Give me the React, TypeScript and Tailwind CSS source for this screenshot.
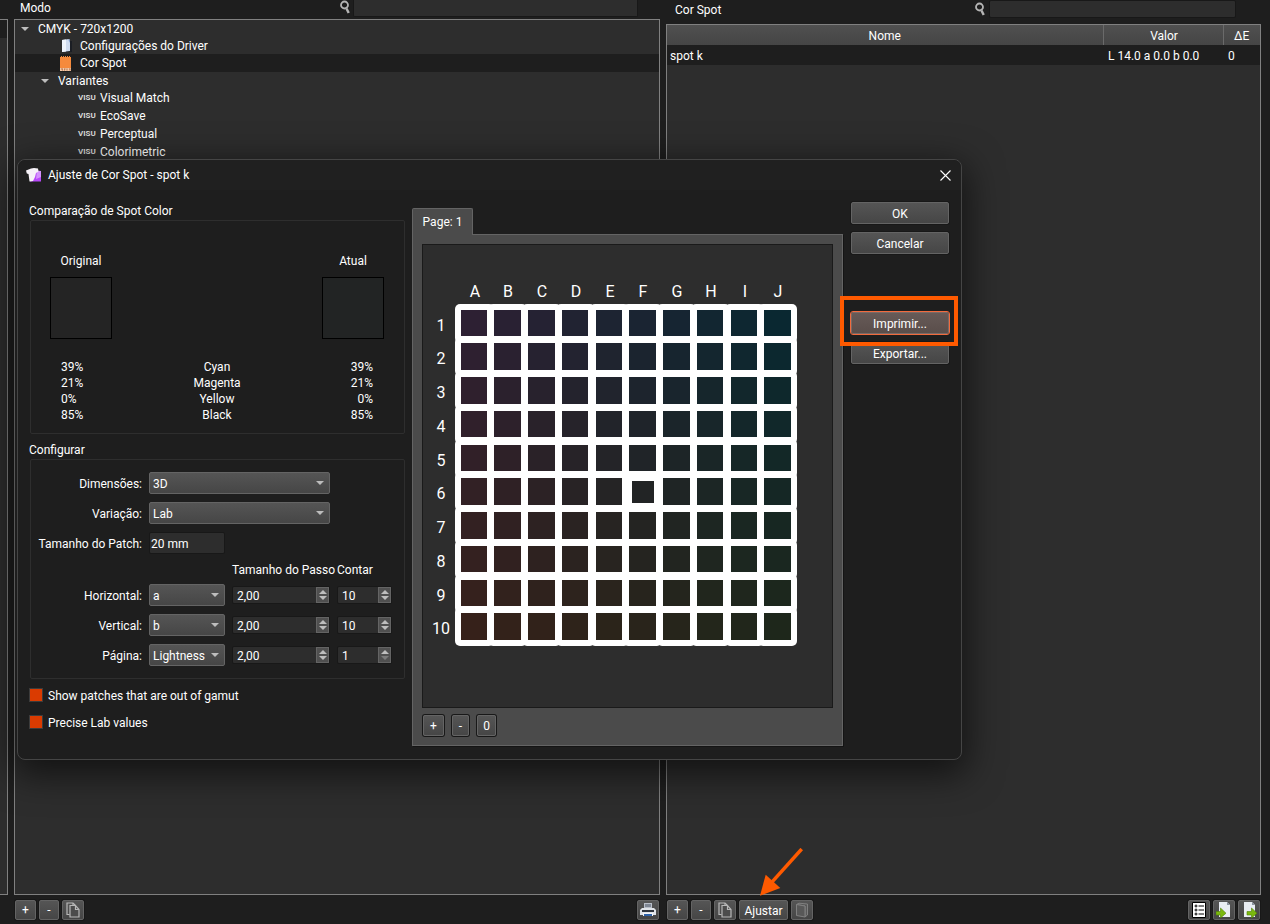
import React, { useState } from "react";

const COLS = ["A", "B", "C", "D", "E", "F", "G", "H", "I", "J"];
const ROWS = [1, 2, 3, 4, 5, 6, 7, 8, 9, 10];
const PITCH = 33.75;

// corner colours of the a/b plane, the rest is interpolated
const TOP_LEFT = [45, 32, 51];
const TOP_RIGHT = [10, 40, 49];
const BOTTOM_LEFT = [54, 33, 26];
const BOTTOM_RIGHT = [30, 39, 27];

const patchColor = (col: number, row: number) => {
  const u = col / 9;
  const v = row / 9;
  const rgb = [0, 1, 2].map((i) => {
    const top = TOP_LEFT[i] * (1 - u) + TOP_RIGHT[i] * u;
    const bottom = BOTTOM_LEFT[i] * (1 - u) + BOTTOM_RIGHT[i] * u;
    return Math.round(top * (1 - v) + bottom * v);
  });
  return `rgb(${rgb.join(",")})`;
};

const inks = [
  { name: "Cyan", original: "39%", current: "39%" },
  { name: "Magenta", original: "21%", current: "21%" },
  { name: "Yellow", original: "0%", current: "0%" },
  { name: "Black", original: "85%", current: "85%" },
];

const BTN =
  "flex items-center justify-center rounded-xs border border-[#646464] bg-linear-to-b from-[#555555] to-[#464646] text-white shadow-[0_0_0_1px_#181818] hover:from-[#606060]";

const Triangle = ({ className }: { className?: string }) => (
  <svg viewBox="0 0 8 4" className={`w-2 h-1 fill-[#bdbdbd] ${className ?? ""}`}>
    <path d="M0 0h8L4 4z" />
  </svg>
);

const SearchIcon = () => (
  <svg viewBox="0 0 10 14" className="w-[10px] h-[14px] shrink-0" fill="none" stroke="#b4b4b4">
    <circle cx="4.5" cy="5" r="3.5" strokeWidth="1.8" />
    <path d="M6.5 8.5l2.200 4.500" strokeWidth="2.400" />
  </svg>
);

const PageIcon = () => (
  <svg viewBox="0 0 12 15" className="w-3 h-[15px] ml-px">
    <path d="M9 3h2v11H4z" fill="#1b1e24" />
    <path d="M1 2l7-1 1 1v11l-8 1z" fill="#cfdcf0" />
    <path d="M1 2l4-.6V13.400L1 14z" fill="#eef4fc" />
    <path d="M7 1l2 1v3z" fill="#7f9cc8" />
  </svg>
);

const SpotIcon = () => (
  <svg viewBox="0 0 11 15" className="w-[11px] h-[15px]">
    <path d="M0 1h1V0h1v1h1V0h1v1h1V0h1v1h1V0h1v1h1V0h1v1h1v13H0z" fill="#f58a3c" />
    <path d="M0 12h11v3H0z" fill="#f3c9a9" />
    <path d="M1 13h2M4 13h1.500M6.500 13h1M9 13h1.500M2 14h1M4 14h1M6.500 14h1M9.500 14h1" stroke="#a0572a" strokeWidth=".8" />
  </svg>
);

const CopyIcon = () => (
  <svg viewBox="0 0 14 16" className="w-[14px] h-4" fill="none" stroke="#b8b8b8" strokeWidth="1.2">
    <path d="M3.500 12.500H1V1h6l2.500 2.500" />
    <path d="M4 3.500h5.500l3.500 4V15H4z" fill="#4c4c4c" />
    <path d="M9.500 3.500v4H13" />
    <path d="M7 1v2.500" />
  </svg>
);

const PrinterIcon = () => (
  <svg viewBox="0 0 18 16" className="w-[18px] h-4">
    <path d="M5 1h8v6H5z" fill="#b9bfc9" />
    <path d="M6 2h6v3H6z" fill="#7f8794" />
    <path d="M3 6h12l2 2v5H1V8z" fill="#dfe3e8" />
    <path d="M3 8h12v2H3z" fill="#2f353e" />
    <path d="M4 11h10v3H4z" fill="#f4f6f8" />
    <path d="M5 12h8v2H5z" fill="#2f62a8" />
  </svg>
);

const BookIcon = () => (
  <svg viewBox="0 0 14 16" className="w-[14px] h-4" fill="#585858" stroke="#808080">
    <path d="M1.500 2.500L4 1.200l8.500.8v11L10 15V4z" />
    <path d="M1.500 2.500L10 4v11l-8.500-1.500z" />
  </svg>
);

const ListIcon = () => (
  <svg viewBox="0 0 14 16" className="w-[14px] h-4">
    <path d="M.5.5h13v15H.5z" fill="#fff" stroke="#000" />
    <path d="M2.500 4h3M2.500 8h3M2.500 12h3M6.500 4H12M6.500 8H12M6.500 12H12M4 2.500v3M4 6.500v3M4 10.500v3" stroke="#000" />
  </svg>
);

const TransferIcon = ({ out }: { out?: boolean }) => (
  <svg viewBox="0 0 16 16" className="w-4 h-4">
    <path d="M3 0h8l3 3v12H3z" fill="#e9edf2" />
    <path d="M11 0l3 3h-3z" fill="#8b949f" />
    <path
      d={out ? "M6 9.500h4.500V6L16 11.200 10.500 16v-3H6z" : "M0 9.500h4.500V6L10 11.200 4.500 16v-3H0z"}
      fill="#7ab80e"
      stroke="#4f8205"
      strokeWidth=".6"
    />
  </svg>
);

const AppIcon = () => (
  <svg viewBox="0 0 16 16" className="w-4 h-4">
    <path d="M5 4h10v10.500H4z" fill="#b848fa" />
    <path d="M11 3.500l4 .5v6L10 12z" fill="#d493fc" />
    <path d="M0 3.500L5 1.500l3-.5 4 .5.500 3-2.500 1.500-1 4-2 4-3.500.5L2.500 7 .8 6.500z" fill="#f6f2f8" />
  </svg>
);

interface SelectProps {
  id: string;
  label: string;
  options: string[];
  className?: string;
}

const Select: React.FC<SelectProps> = ({ id, label, options, className }) => (
  <>
    <label htmlFor={id} className="text-right pt-[2px]">{label}</label>
    <div className={`relative ${className ?? ""}`}>
      <select
        id={id}
        className="block w-full h-[22px] appearance-none rounded-xs border border-[#646464] bg-linear-to-b from-[#555555] to-[#464646] pt-[2px] pl-[3px] pr-4 text-xs text-white outline-none"
      >
        {options.map((o) => (
          <option key={o}>{o}</option>
        ))}
      </select>
      <Triangle className="absolute right-[6px] top-[9px] pointer-events-none" />
    </div>
  </>
);

interface SpinProps {
  label: string;
  initial: number;
  decimals?: number;
  min?: number;
}

const Spin: React.FC<SpinProps> = ({ label, initial, decimals = 0, min = 0 }) => {
  const [value, setValue] = useState(initial);
  const atMin = value <= min;

  return (
    <div className="flex h-[18px] rounded-xs border border-[#181818] bg-[#2d2d2d]">
      <input
        aria-label={label}
        value={value.toFixed(decimals).replace(".", ",")}
        onChange={(e) => setValue(Number(e.target.value.replace(",", ".")) || 0)}
        className="min-w-0 flex-1 pl-1 pt-[2px] text-xs text-white bg-transparent outline-none"
      />
      <div className="w-[13px] flex flex-col items-center justify-center gap-[2px] border border-[#646464] bg-[#505050]">
        <button type="button" aria-label={`${label} +`} onClick={() => setValue(value + 1)}>
          <Triangle className="rotate-180 block" />
        </button>
        <button type="button" aria-label={`${label} -`} disabled={atMin} onClick={() => setValue(value - 1)}>
          <Triangle className={atMin ? "block opacity-40" : "block"} />
        </button>
      </div>
    </div>
  );
};

const Check = ({ label }: { label: string }) => (
  <label className="flex items-center gap-[5px] h-4">
    <input
      type="checkbox"
      defaultChecked
      className="w-[14px] h-[14px] appearance-none border border-[#3c3c3c] bg-[#2d2d2d] checked:bg-[#da3b01]"
    />
    <span className="pt-[2px]">{label}</span>
  </label>
);

const PatchChart = () => (
  <svg viewBox="0 0 368 366" className="w-[368px] h-[366px]" fill="#fff">
    {COLS.map((c, i) => (
      <text key={c} x={46 + Math.floor(i * PITCH)} y="17" textAnchor="middle" className="text-base">
        {c}
      </text>
    ))}
    {ROWS.map((r, i) => (
      <text key={r} x="12" y={51 + Math.floor(i * PITCH)} textAnchor="middle" className="text-base">
        {r}
      </text>
    ))}
    {ROWS.map((r, y) =>
      COLS.map((c, x) => (
        <rect
          key={c + r}
          x={26 + Math.floor(x * PITCH)}
          y={24 + Math.floor(y * PITCH)}
          width="39"
          height="39"
          rx="5"
        />
      ))
    )}
    {ROWS.map((r, y) =>
      COLS.map((c, x) => {
        // the middle patch is the current colour and has a thicker frame
        const inset = x === 5 && y === 5 ? 3 : 0;
        const left = 32 + Math.floor(x * PITCH) + inset;
        const top = 30 + Math.floor(y * PITCH) + inset;
        return (
          <rect
            key={c + r}
            x={left}
            y={top}
            width={Math.floor(58.5 + x * PITCH) - left - (inset ? 2 : 0)}
            height={Math.floor(56.5 + y * PITCH) - top - (inset ? 2 : 0)}
            fill={patchColor(x, y)}
          />
        );
      })
    )}
  </svg>
);

const tree = [
  { label: "Configurações do Driver", icon: <PageIcon />, row: "h-[17px]" },
  { label: "Cor Spot", icon: <SpotIcon />, row: "h-[18px] bg-[#1e1e1e]" },
];

const variants = ["Visual Match", "EcoSave", "Perceptual", "Colorimetric"];

const AdjustDialog = () => (
  <div
    role="dialog"
    aria-label="Ajuste de Cor Spot - spot k"
    className="absolute left-[17px] top-[159px] w-[945px] rounded-lg border border-[#454545] bg-[#1e1e1e] shadow-[0_10px_36px_4px_rgba(0,0,0,0.6)]"
  >
    <div className="h-[30px] flex items-center rounded-t-lg bg-[#202020] pl-2 pr-[10px]">
      <AppIcon />
      <span className="ml-[6px] flex-1">Ajuste de Cor Spot - spot k</span>
      <button type="button" aria-label="Fechar">
        <svg viewBox="0 0 11 11" className="w-[11px] h-[11px]" stroke="#fff" strokeWidth="1.100">
          <path d="M.5.5l10 10M10.500.5l-10 10" />
        </svg>
      </button>
    </div>

    <div className="flex pt-3 pl-[11px] pr-3 pb-[13px]">
      <div className="w-[376px]">
        <h2 className="pt-px">Comparação de Spot Color</h2>
        <div className="mt-px ml-px rounded-xs border border-[#2e2e2e] pt-8 pl-[19px] pr-5 pb-[10px]">
          <div className="flex justify-between">
            <div className="w-[62px] text-center">
              <p>Original</p>
              <div className="mt-2 h-[62px] border border-black bg-[#242424]" />
            </div>
            <div className="w-[62px] text-center">
              <p>Atual</p>
              <div className="mt-2 h-[62px] border border-black bg-[#222424]" />
            </div>
          </div>
          <table className="w-full mt-5">
            <tbody>
              {inks.map((ink) => (
                <tr key={ink.name}>
                  <td className="w-20 p-0 pl-[11px] text-left">{ink.original}</td>
                  <td className="p-0 text-center">{ink.name}</td>
                  <td className="w-20 p-0 pr-[11px] text-right">{ink.current}</td>
                </tr>
              ))}
            </tbody>
          </table>
        </div>

        <h2 className="mt-2">Configurar</h2>
        <div className="mt-px ml-px rounded-xs border border-[#2e2e2e] pt-3 pb-3">
          <div className="grid grid-cols-[111px_76px_98px_55px] gap-x-[7px] gap-y-2 items-center">
            <Select id="dimensions" label="Dimensões:" options={["3D", "2D"]} className="col-span-2" />
            <span />
            <Select id="variation" label="Variação:" options={["Lab", "LCh"]} className="col-span-2" />
            <span />
            <label htmlFor="patch" className="text-right pt-[2px] whitespace-nowrap">Tamanho do Patch:</label>
            <input
              id="patch"
              defaultValue="20 mm"
              className="h-[22px] w-full rounded-xs border border-[#181818] bg-[#2d2d2d] pt-[2px] pl-px text-xs text-white outline-none"
            />
            <span className="col-span-2" />
            <span className="col-span-2" />
            <span className="h-[14px] leading-4 whitespace-nowrap">Tamanho do Passo</span>
            <span className="h-[14px] leading-4">Contar</span>
            <Select id="horizontal" label="Horizontal:" options={["a", "b", "Lightness"]} />
            <Spin label="Passo horizontal" initial={2} decimals={2} />
            <Spin label="Contar horizontal" initial={10} min={1} />
            <Select id="vertical" label="Vertical:" options={["b", "a", "Lightness"]} />
            <Spin label="Passo vertical" initial={2} decimals={2} />
            <Spin label="Contar vertical" initial={10} min={1} />
            <Select id="page" label="Página:" options={["Lightness", "a", "b"]} />
            <Spin label="Passo da página" initial={2} decimals={2} />
            <Spin label="Contar páginas" initial={1} min={1} />
          </div>
        </div>

        <div className="mt-2 flex flex-col gap-[11px]">
          <Check label="Show patches that are out of gamut" />
          <Check label="Precise Lab values" />
        </div>
      </div>

      <div className="ml-[7px] mt-[6px] w-[431px]">
        <button
          type="button"
          className="relative z-10 block h-[27px] w-[61px] rounded-t-xs border border-b-0 border-[#646464] bg-[#4b4b4b] whitespace-nowrap"
        >
          Page: 1
        </button>
        <div className="-mt-px border border-[#646464] bg-[#4b4b4b] p-[9px] pb-2 shadow-[1px_1px_0_#141414]">
          <div className="h-[464px] border border-[#1a1a1a] bg-[#2d2d2d] pt-[35px] pl-[6px]">
            <PatchChart />
          </div>
          <div className="mt-[7px] mb-px ml-px flex gap-2">
            <button type="button" className={`${BTN} w-[21px] h-[21px]`}>+</button>
            <button type="button" className={`${BTN} w-[17px] h-[21px]`}>-</button>
            <button type="button" className={`${BTN} w-[19px] h-[21px]`}>0</button>
          </div>
        </div>
      </div>

      <div className="ml-2 flex-1 flex flex-col gap-2">
        <button type="button" className={`${BTN} h-[22px] pt-[2px]`}>OK</button>
        <button type="button" className={`${BTN} h-[22px] pt-[2px]`}>Cancelar</button>
        <div className="relative mt-[50px]">
          <button
            type="button"
            className="h-[22px] w-full rounded-xs border border-[#7a6a66] bg-linear-to-b from-[#665a57] to-[#5a4e4b] pt-[2px] outline outline-[#f26a3d]"
          >
            Imprimir...
          </button>
          <div className="absolute z-10 -top-4 -bottom-3 -left-[11px] -right-[9px] border-4 border-[#ff5a00] pointer-events-none" />
        </div>
        <button type="button" className={`${BTN} h-[22px] pt-[2px]`}>Exportar...</button>
      </div>
    </div>
  </div>
);

const App: React.FC = () => {
  return (
    <div className="relative h-screen min-h-[780px] overflow-hidden flex bg-[#1e1e1e] text-white text-xs leading-4 font-[Roboto,'Open_Sans',sans-serif]">
      <div className="w-2 pt-[19px] pb-[29px]">
        <div className="h-full border border-l-0 border-[#808080] bg-[#2d2d2d]">
          <div className="h-[18px] bg-[#1e1e1e]" />
        </div>
      </div>

      <section className="ml-[6px] flex-[646] flex flex-col">
        <div className="h-[19px] flex items-start pl-[6px] pr-[22px]">
          <label htmlFor="mode-search" className="flex-1 text-xs">Modo</label>
          <SearchIcon />
          <input
            id="mode-search"
            className="ml-[3px] w-[285px] h-[17px] rounded-b-xs border border-t-0 border-[#181818] bg-[#2d2d2d] outline-none"
          />
        </div>
        <div className="flex-1 border border-[#808080] bg-[#2d2d2d]">
          <div className="h-[17px] flex items-center pl-[6px]">
            <Triangle />
            <span className="ml-[9px]">CMYK - 720x1200</span>
          </div>
          {tree.map((item) => (
            <div key={item.label} className={`${item.row} flex items-center pl-[45px]`}>
              <span className="w-5">{item.icon}</span>
              {item.label}
            </div>
          ))}
          <div className="h-[17px] flex items-center pl-[26px]">
            <Triangle />
            <span className="ml-[9px]">Variantes</span>
          </div>
          {variants.map((v) => (
            <div key={v} className="h-[18px] flex items-center pl-[63px]">
              <span className="w-[22px] text-[8px] font-bold text-[#d8d8d8] leading-4">VISU</span>
              {v}
            </div>
          ))}
        </div>
        <div className="h-[29px] flex items-center gap-[3px] pl-px pt-[5px] pb-1">
          <button type="button" className={`${BTN} w-[21px] h-5`}>+</button>
          <button type="button" className={`${BTN} w-5 h-5`}>-</button>
          <button type="button" aria-label="Copiar" className={`${BTN} w-[22px] h-5`}><CopyIcon /></button>
          <button type="button" aria-label="Imprimir" className={`${BTN} w-[22px] h-5 ml-auto mr-px`}><PrinterIcon /></button>
        </div>
      </section>

      <section className="ml-[6px] mr-[9px] flex-[595] flex flex-col">
        <div className="h-6 flex items-start pl-[9px] pr-[25px]">
          <label htmlFor="spot-search" className="flex-1 pt-[2px]">Cor Spot</label>
          <span className="pt-[2px]"><SearchIcon /></span>
          <input
            id="spot-search"
            className="ml-1 w-[247px] h-[18px] rounded-xs border border-[#181818] bg-[#2d2d2d] outline-none"
          />
        </div>
        <div className="flex-1 border border-[#808080] bg-[#2d2d2d]">
          <table className="w-full table-fixed border-collapse">
            <thead>
              <tr className="h-5 bg-linear-to-b from-[#505050] to-[#454545]">
                <th className="p-0 pt-[2px] font-normal">Nome</th>
                <th className="p-0 pt-[2px] pl-[2px] w-[120px] font-normal border-l border-[#6a6a6a]">Valor</th>
                <th className="p-0 pt-[2px] w-[37px] font-normal border-l border-[#6a6a6a]">ΔE</th>
              </tr>
            </thead>
            <tbody>
              <tr className="h-5 bg-[#1e1e1e]">
                <td className="p-0 pt-[2px] pl-[3px]">spot k</td>
                <td className="p-0 pt-[2px] pl-[5px]">L 14.0 a 0.0 b 0.0</td>
                <td className="p-0 pt-[2px] pl-[5px]">0</td>
              </tr>
            </tbody>
          </table>
        </div>
        <div className="h-[29px] flex items-center gap-[3px] px-px pt-[5px] pb-1">
          <button type="button" className={`${BTN} w-[21px] h-5`}>+</button>
          <button type="button" className={`${BTN} w-5 h-5`}>-</button>
          <button type="button" aria-label="Copiar" className={`${BTN} w-[22px] h-5`}><CopyIcon /></button>
          <div className="relative">
            <button type="button" className={`${BTN} w-[49px] h-5 pt-[2px]`}>Ajustar</button>
            <svg
              viewBox="0 0 46 48"
              className="absolute left-5 bottom-6 w-[46px] h-12 pointer-events-none"
              fill="#ff5a00"
            >
              <path d="M42.700 1L12.700 34.300" stroke="#ff5a00" strokeWidth="3.500" />
              <path d="M1 47.700l5.700-21L21.300 40z" />
            </svg>
          </div>
          <button type="button" aria-label="Biblioteca" className={`${BTN} w-[22px] h-5`}><BookIcon /></button>
          <button type="button" aria-label="Lista" className={`${BTN} w-[22px] h-5 ml-auto`}><ListIcon /></button>
          <button type="button" aria-label="Importar" className={`${BTN} w-[22px] h-5`}><TransferIcon /></button>
          <button type="button" aria-label="Exportar" className={`${BTN} w-[22px] h-5`}><TransferIcon out /></button>
        </div>
      </section>

      <AdjustDialog />
    </div>
  );
};

export default App;
